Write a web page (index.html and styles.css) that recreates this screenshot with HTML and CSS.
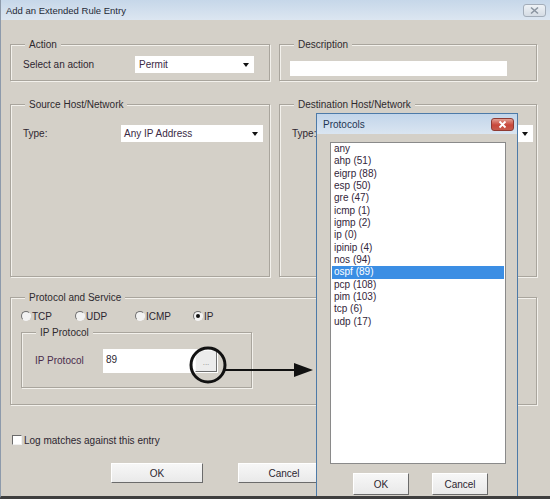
FILE: index.html
```html
<!DOCTYPE html>
<html>
<head>
<meta charset="utf-8">
<title>Add an Extended Rule Entry</title>
<link rel="stylesheet" href="styles.css">
</head>
<body>
<div class="window">
  <div class="titlebar">
    <span class="title">Add an Extended Rule Entry</span>
    <span class="close close-main">
      <svg width="11" height="9" viewBox="0 0 11 9"><path d="M2 1.5 L9 7.5 M9 1.5 L2 7.5" stroke="#8a94a0" stroke-width="1.6" fill="none"/></svg>
    </span>
  </div>
  <div class="content">
    <div class="grid">
      <div class="group">
        <div class="legend">Action</div>
        <div class="gbody action-body">
          <span class="lbl lbl-action">Select an action</span>
          <div class="select sel-action"><span>Permit</span><i class="arrow"></i></div>
        </div>
      </div>
      <div class="group">
        <div class="legend">Description</div>
        <div class="gbody desc-body">
          <div class="textbox desc-input"></div>
        </div>
      </div>
      <div class="group">
        <div class="legend">Source Host/Network</div>
        <div class="gbody type-body">
          <span class="lbl lbl-src">Type:</span>
          <div class="select sel-type"><span>Any IP Address</span><i class="arrow"></i></div>
        </div>
      </div>
      <div class="group">
        <div class="legend">Destination Host/Network</div>
        <div class="gbody type-body">
          <span class="lbl lbl-dst">Type:</span>
          <div class="select sel-type"><span>Any IP Address</span><i class="arrow"></i></div>
        </div>
      </div>
    </div>

    <div class="group g-proto">
      <div class="legend">Protocol and Service</div>
      <div class="radios">
        <span class="radio r-tcp"><i class="dot"></i>TCP</span>
        <span class="radio r-udp"><i class="dot"></i>UDP</span>
        <span class="radio r-icmp"><i class="dot"></i>ICMP</span>
        <span class="radio r-ip"><i class="dot on"></i>IP</span>
      </div>
      <div class="group g-ip">
        <div class="legend">IP Protocol</div>
        <div class="ip-row">
          <span class="lbl lbl-ip">IP Protocol</span>
          <div class="textbox ip-input"><span class="ip-val">89</span><span class="browse">...</span></div>
        </div>
      </div>
    </div>

    <div class="log"><i class="check"></i><span>Log matches against this entry</span></div>

    <div class="buttons">
      <button class="btn">OK</button>
      <button class="btn">Cancel</button>
    </div>
  </div>

  <svg class="annot" width="135" height="50" viewBox="0 0 135 50">
    <circle cx="23" cy="25" r="17" stroke="#111" stroke-width="3" fill="none"/>
    <line x1="40" y1="30" x2="114" y2="30" stroke="#111" stroke-width="2"/>
    <polygon points="109,23 128,30 109,37" fill="#111"/>
  </svg>

  <div class="popup">
    <div class="ptitle">
      <span class="ptitle-text">Protocols</span>
      <span class="close close-red">
        <svg width="11" height="9" viewBox="0 0 11 9"><path d="M2.5 1.5 L8.5 7.5 M8.5 1.5 L2.5 7.5" stroke="#fff" stroke-width="1.8" fill="none"/></svg>
      </span>
    </div>
    <div class="pbody">
      <div class="listbox">
        <div class="item">any</div>
        <div class="item">ahp (51)</div>
        <div class="item">eigrp (88)</div>
        <div class="item">esp (50)</div>
        <div class="item">gre (47)</div>
        <div class="item">icmp (1)</div>
        <div class="item">igmp (2)</div>
        <div class="item">ip (0)</div>
        <div class="item">ipinip (4)</div>
        <div class="item">nos (94)</div>
        <div class="item sel">ospf (89)</div>
        <div class="item">pcp (108)</div>
        <div class="item">pim (103)</div>
        <div class="item">tcp (6)</div>
        <div class="item">udp (17)</div>
      </div>
      <div class="pbuttons">
        <button class="btn pbtn">OK</button>
        <button class="btn pbtn">Cancel</button>
      </div>
    </div>
  </div>
</div>
</body>
</html>
```

FILE: styles.css
```css
* { box-sizing: border-box; }
html, body { margin: 0; padding: 0; }
body {
  width: 550px;
  height: 499px;
  overflow: hidden;
  background: #3e3e3e;
  font-family: "Liberation Sans", Arial, sans-serif;
  font-size: 10px;
  color: #2c2630;
}

.window {
  position: relative;
  width: 550px;
  height: 498px;
  background: #d4d0c8;
  border-left: 1px solid #8d9aab;
  border-bottom: 2px solid #3e3e3e;
  display: flex;
  flex-direction: column;
  overflow: hidden;
}

.titlebar {
  height: 20px;
  flex: none;
  display: flex;
  align-items: center;
  justify-content: space-between;
  padding: 0 4px 0 5px;
  background: linear-gradient(#c6d7e9, #dce6f1);
}
.title { font-size: 9.5px; color: #1f2a36; }

.close {
  width: 23px;
  height: 13px;
  border-radius: 3px;
  display: flex;
  align-items: center;
  justify-content: center;
}
.close-main {
  border: 1px solid #a3adb9;
  background: linear-gradient(#eef2f6, #d5dce4);
}
.close-red {
  border: 1px solid #8f3a33;
  background: linear-gradient(#e3a093, #c8473a 55%, #c65a4c);
}

.content { padding: 24px 13px 0 9px; }

.grid {
  display: grid;
  grid-template-columns: 260px 258px;
  grid-template-rows: 37px 173px;
  column-gap: 9px;
  row-gap: 23px;
}

.group {
  border: 1px solid #a9a59d;
  box-shadow: inset 1px 1px 0 #f3f1ec, 1px 1px 0 #f3f1ec;
}
.legend {
  display: table;
  margin: -7px 0 0 14px;
  padding: 0 4px;
  line-height: 13px;
  background: #d4d0c8;
  color: #2e2a2e;
}

.gbody { display: flex; align-items: center; }
.action-body { padding: 5px 0 0 12px; }
.desc-body { padding: 10px 0 0 10px; }
.type-body { padding: 14px 0 0 12px; }

.lbl { color: #2e2630; }
.lbl-action { width: 112px; }
.lbl-src { width: 98px; }
.lbl-dst { width: 99px; }

.select {
  height: 17px;
  background: #fff;
  display: flex;
  align-items: center;
  justify-content: space-between;
  padding: 0 5px 0 4px;
  color: #3a2a44;
}
.sel-action { width: 119px; }
.sel-type { width: 142px; padding-left: 3px; }
.arrow {
  width: 0;
  height: 0;
  border-left: 3.5px solid transparent;
  border-right: 3.5px solid transparent;
  border-top: 4px solid #111;
}

.textbox { background: #fff; }
.desc-input { width: 217px; height: 15px; }

.g-proto { margin-top: 20px; height: 108px; }
.radios { display: flex; padding: 6px 0 0 10px; height: 18px; align-items: center; }
.radio { display: flex; align-items: center; gap: 1px; height: 12px; }
.r-tcp { width: 54px; }
.r-udp { width: 60px; }
.r-icmp { width: 58px; }
.dot {
  width: 10px;
  height: 10px;
  border-radius: 50%;
  border: 1px solid;
  border-color: #6f6f6f #f4f4f4 #f4f4f4 #6f6f6f;
  background: #f2f2f2;
  display: flex;
  align-items: center;
  justify-content: center;
}
.dot.on::after {
  content: "";
  width: 4px;
  height: 4px;
  border-radius: 50%;
  background: #111;
}

.g-ip { margin: 10px 0 0 10px; width: 231px; height: 56px; }
.ip-row { display: flex; align-items: flex-start; padding: 10px 0 0 13px; }
.lbl-ip { width: 68px; line-height: 24px; color: #4a2c4c; }
.ip-input {
  width: 115px;
  height: 24px;
  display: flex;
  justify-content: space-between;
  padding-left: 3px;
}
.ip-val { padding-top: 4px; line-height: 13px; }
.browse {
  width: 22px;
  height: 22px;
  margin: 1px 1px 0 0;
  background: #ececec;
  border: 1px solid;
  border-color: #fafafa #707070 #707070 #fafafa;
  color: #888;
  font-size: 8px;
  display: flex;
  align-items: center;
  justify-content: center;
  padding-top: 3px;
}

.log {
  margin-top: 28px;
  height: 14px;
  display: flex;
  align-items: center;
  padding-left: 2px;
  gap: 2px;
}
.check {
  width: 10px;
  height: 10px;
  background: #fff;
  border: 1px solid;
  border-color: #6a6a6a #f0f0f0 #f0f0f0 #6a6a6a;
}

.buttons { margin-top: 16px; display: flex; gap: 35px; padding-left: 101px; }
.btn {
  width: 92px;
  height: 20px;
  padding: 0;
  font-family: inherit;
  font-size: 10px;
  color: #2c2630;
  background: linear-gradient(#f7f7f7, #e9e9e9);
  border: 1px solid;
  border-color: #ffffff #6b6b6b #6b6b6b #ffffff;
}

.annot { position: absolute; left: 184px; top: 340px; }

.popup {
  position: absolute;
  left: 315px;
  top: 113px;
  width: 202px;
  height: 400px;
  border: 1px solid #4d7aa8;
  background: #d4d0c8;
  display: flex;
  flex-direction: column;
}
.ptitle {
  height: 20px;
  flex: none;
  display: flex;
  align-items: center;
  justify-content: space-between;
  padding: 0 3px 0 6px;
  background: linear-gradient(#c2d5ea, #dae5f1);
}
.ptitle-text { color: #1e3552; font-size: 10px; }
.pbody { padding: 8px 0 0 13px; }
.listbox {
  width: 176px;
  height: 322px;
  background: #fff;
  border: 1px solid #8a8a8a;
}
.item {
  line-height: 12.35px;
  padding-left: 2px;
  margin: 0 1px;
  color: #33263a;
}
.item.sel { background: #3b8ee4; color: #fff; }
.pbuttons { display: flex; gap: 23px; padding-left: 23px; margin-top: 9px; }
.pbtn { width: 56px; height: 22px; }
```
